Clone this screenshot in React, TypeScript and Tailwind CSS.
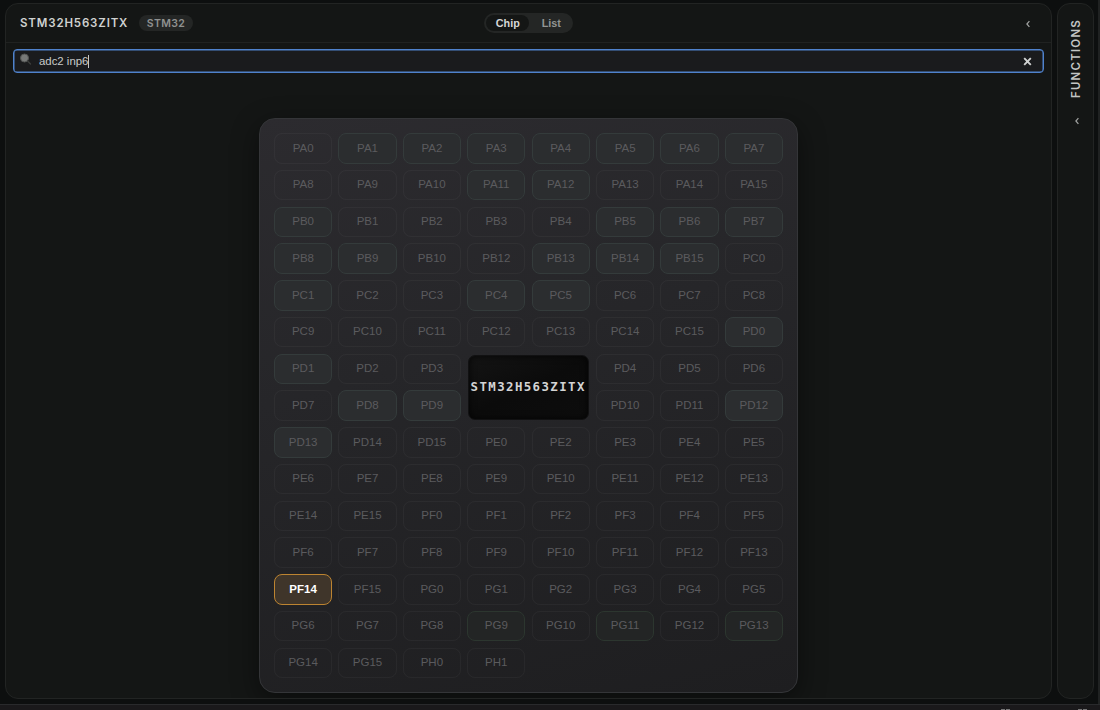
import clsx from "clsx";

const PINS: string[] = [
  "PA0", "PA1", "PA2", "PA3", "PA4", "PA5", "PA6", "PA7",
  "PA8", "PA9", "PA10", "PA11", "PA12", "PA13", "PA14", "PA15",
  "PB0", "PB1", "PB2", "PB3", "PB4", "PB5", "PB6", "PB7",
  "PB8", "PB9", "PB10", "PB12", "PB13", "PB14", "PB15", "PC0",
  "PC1", "PC2", "PC3", "PC4", "PC5", "PC6", "PC7", "PC8",
  "PC9", "PC10", "PC11", "PC12", "PC13", "PC14", "PC15", "PD0",
  "PD1", "PD2", "PD3", "PD4", "PD5", "PD6",
  "PD7", "PD8", "PD9", "PD10", "PD11", "PD12",
  "PD13", "PD14", "PD15", "PE0", "PE2", "PE3", "PE4", "PE5",
  "PE6", "PE7", "PE8", "PE9", "PE10", "PE11", "PE12", "PE13",
  "PE14", "PE15", "PF0", "PF1", "PF2", "PF3", "PF4", "PF5",
  "PF6", "PF7", "PF8", "PF9", "PF10", "PF11", "PF12", "PF13",
  "PF14", "PF15", "PG0", "PG1", "PG2", "PG3", "PG4", "PG5",
  "PG6", "PG7", "PG8", "PG9", "PG10", "PG11", "PG12", "PG13",
  "PG14", "PG15", "PH0", "PH1",
];

// pins that already have a function assigned
const ASSIGNED = new Set([
  "PA1", "PA2", "PA3", "PA4", "PA5", "PA6", "PA7", "PA11", "PA12",
  "PB0", "PB5", "PB6", "PB7", "PB8", "PB9", "PB13", "PB14", "PB15",
  "PC1", "PC4", "PC5", "PD0", "PD1", "PD8", "PD9", "PD12", "PD13",
  "PG9", "PG11", "PG13",
]);

const MATCHES = new Set(["PF14"]);

export default function App() {
  return (
    <div className="flex h-[710px] w-[1100px] flex-col overflow-hidden bg-[#0d0f0f] font-['Liberation_Sans',sans-serif]">
      <div className="flex h-[704px] shrink-0 gap-[5px] border-r-2 border-[#202222] pt-[3px] pr-1 pb-[5px] pl-[5px]">
        <main className="flex w-[1047px] shrink-0 flex-col overflow-hidden rounded-[13px] border border-[#222423] bg-[#141615]">
          <Header />
          <SearchBar />
          <div className="flex justify-center pt-[45px]">
            <ChipView />
          </div>
        </main>
        <aside className="flex w-[37px] shrink-0 flex-col items-center rounded-[13px] border border-[#222423] bg-[#141615] pt-[15px]">
          <span className="rotate-180 font-['Inter',sans-serif] text-[11.5px] leading-[14px] font-semibold tracking-[1.2px] text-[#c3c5c4] [writing-mode:vertical-rl]">
            FUNCTIONS
          </span>
          <Chevron className="mt-[19px] ml-[3px]" />
        </aside>
      </div>
      <StatusEdge />
    </div>
  );
}

function Header() {
  return (
    <header className="grid h-[39px] shrink-0 grid-cols-[1fr_auto_1fr] items-center border-b border-[#202221] pr-[20px] pl-[14px]">
      <div className="flex items-center gap-[11px]">
        <h1 className="w-[108px] pt-px font-['Inter',sans-serif] text-[11.5px] font-semibold tracking-[0.85px] whitespace-nowrap text-[#cfd1d0]">
          STM32H563ZITX
        </h1>
        <span className="flex h-4 w-[54px] items-center justify-center rounded-full bg-[#242625] pt-px font-['Inter',sans-serif] text-[10.5px] font-semibold tracking-[0.35px] text-[#8f9190]">
          STM32
        </span>
      </div>
      <div className="ml-[5px] flex h-5 w-[89px] items-center rounded-full bg-[#242625] p-[2px] text-[10.8px] font-bold">
        <button className="flex h-4 w-[44px] items-center justify-center rounded-full bg-[#141615] pl-px text-[#d5d7d6]">Chip</button>
        <button className="flex h-4 w-[42px] items-center justify-center pl-[3px] text-[#929493]">List</button>
      </div>
      <Chevron className="mt-[2px] justify-self-end" />
    </header>
  );
}

function SearchBar() {
  return (
    <div className="mx-[7px] mt-[6px] flex h-6 shrink-0 items-center rounded-[4px] border border-[#4f82cc] bg-[#1a1b1d] pr-[11px] pl-[5px] shadow-[inset_0_0_0_0.5px_#4f82cc]">
      <svg className="-mt-[3px]" width="13" height="13" viewBox="0 0 13 13">
        <circle cx="5.5" cy="5" r="4" fill="#777978" stroke="#525453" />
        <path d="M8.5 8l3 3" stroke="#3c3e3d" strokeWidth="1.4" strokeLinecap="round" />
      </svg>
      <span className="mt-px ml-[7px] text-[11.4px] text-[#c9cbca]">adc2 inp6</span>
      <span className="h-[13px] w-px bg-[#c4c6c5]" />
      <svg className="ml-auto" width="9" height="9" viewBox="0 0 9 9">
        <path d="M1.2 1.2l6.6 6.6M7.8 1.2l-6.6 6.6" stroke="#d0d2d1" strokeWidth="1.9" />
      </svg>
    </div>
  );
}

function ChipView() {
  return (
    <div className="h-[575px] w-[539px] rounded-[16px] border border-[#343538] bg-[linear-gradient(165deg,#2c2b2f_0%,#262629_40%,#1e1e20_100%)] p-[14px] shadow-[0_8px_28px_rgba(0,0,0,0.45)]">
      <div className="grid auto-rows-[30.6px] grid-cols-8 gap-[6.17px]">
        <div className="col-span-2 col-start-4 row-span-2 row-start-7 m-px flex items-center justify-center rounded-[7px] border border-[#111112] bg-[linear-gradient(155deg,#141414,#0b0b0b_50%,#0d0d0d)] shadow-[inset_0_0_7px_rgba(0,0,0,0.8)]">
          <span className="mr-[0.6px] font-['DejaVu_Sans_Mono',monospace] text-[12.4px] font-bold tracking-[1.4px] text-[#d4d4d4]">
            STM32H563ZITX
          </span>
        </div>
        {PINS.map((pin) => (
          <Pin key={pin} name={pin} />
        ))}
      </div>
    </div>
  );
}

function Pin({ name }: { name: string }) {
  const matched = MATCHES.has(name);
  const gpioG = name.startsWith("PG");
  return (
    <div
      className={clsx(
        "flex items-center justify-center rounded-[8px] border text-[11.5px]",
        matched && "border-[#bd8431] bg-[#3f352a] font-bold text-white",
        !matched && "text-[#5b5b5e]",
        !matched && ASSIGNED.has(name) && !gpioG && "border-[#343b3b] bg-[#2b2d2f]",
        !matched && ASSIGNED.has(name) && gpioG && "border-[#2c362f] bg-[#232525]",
        !matched && !ASSIGNED.has(name) && "border-white/[0.035]"
      )}
    >
      {name}
    </div>
  );
}

function Chevron({ className }: { className?: string }) {
  return (
    <svg className={className} width="6" height="8" viewBox="0 0 6 8" fill="none">
      <path d="M4.4 1.2L1.9 4l2.5 2.8" stroke="#a1a3a2" strokeWidth="1.2" />
    </svg>
  );
}

// top edge of the panel below, mostly cut off by the window
function StatusEdge() {
  return (
    <footer className="flex h-[6px] justify-end gap-[68px] border-t border-[#292a2c] bg-[#1a191b] pt-1 pr-[13px]">
      <span className="flex gap-px">
        <i className="h-px w-1 bg-[#737374]" />
        <i className="h-px w-1 bg-[#737374]" />
      </span>
      <span className="flex gap-px">
        <i className="h-px w-1 bg-[#737374]" />
        <i className="h-px w-1 bg-[#737374]" />
      </span>
    </footer>
  );
}
